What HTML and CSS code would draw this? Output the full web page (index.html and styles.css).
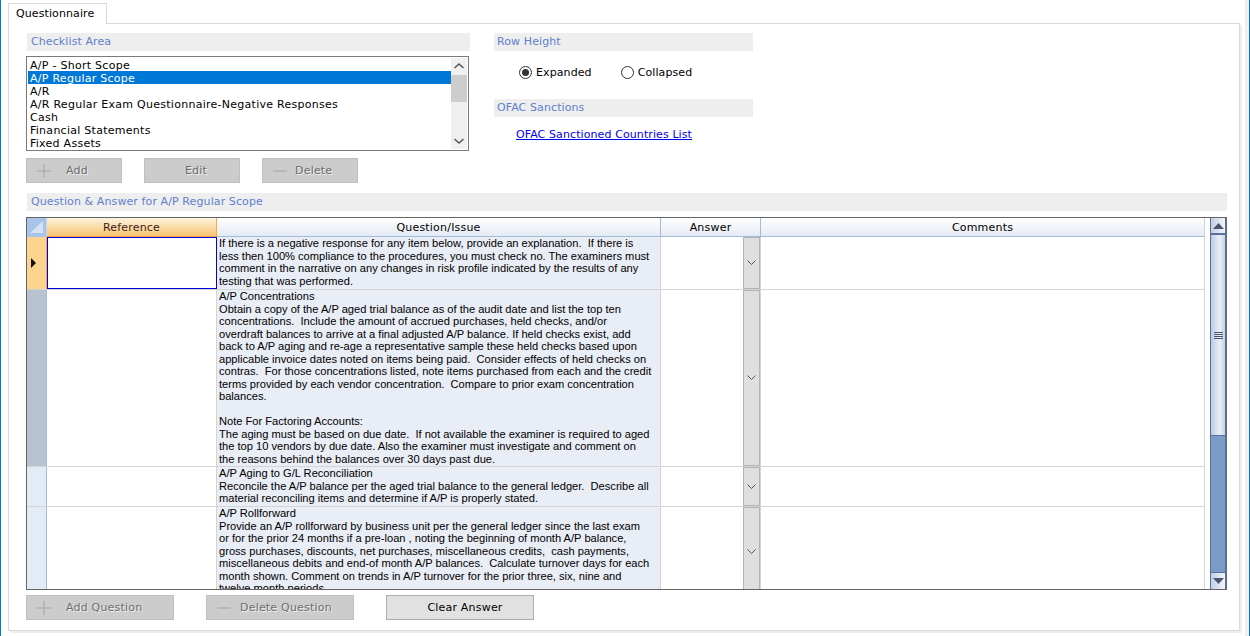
FILE: index.html
```html
<!DOCTYPE html>
<html lang="en">
<head>
<meta charset="utf-8">
<title>Questionnaire</title>
<link rel="stylesheet" href="styles.css">
</head>
<body>
<div class="window">
  <div class="tabs"><div class="tab">Questionnaire</div></div>
  <div class="panel">
    <div class="top">
      <section class="left">
        <h2 class="band">Checklist Area</h2>
        <div class="listbox">
          <ul class="items">
            <li>A/P - Short Scope</li>
            <li class="sel">A/P Regular Scope</li>
            <li>A/R</li>
            <li>A/R Regular Exam Questionnaire-Negative Responses</li>
            <li>Cash</li>
            <li>Financial Statements</li>
            <li>Fixed Assets</li>
          </ul>
          <div class="lscroll">
            <svg class="chev" width="16" height="17" viewBox="0 0 16 17"><path d="M3.5 10 L8 6 L12.5 10" fill="none" stroke="#555" stroke-width="1.5"/></svg>
            <div class="lthumb"></div>
            <div class="lspace"></div>
            <svg class="chev" width="16" height="17" viewBox="0 0 16 17"><path d="M3.5 7 L8 11 L12.5 7" fill="none" stroke="#555" stroke-width="1.5"/></svg>
          </div>
        </div>
        <div class="btns btns-list">
          <button class="btn off w96"><svg class="ico" width="16" height="16" viewBox="0 0 16 16"><path d="M8 1V15M1 8H15" stroke="#a4a4a4"/></svg><span class="lab-add">Add</span></button>
          <button class="btn off w96 center shift-edit">Edit</button>
          <button class="btn off w96"><svg class="ico" width="16" height="16" viewBox="0 0 16 16"><path d="M1 8H15" stroke="#a4a4a4"/></svg><span class="lab-del">Delete</span></button>
        </div>
      </section>
      <section class="right">
        <h2 class="band">Row Height</h2>
        <div class="radios">
          <span class="radio"><span class="dot on"></span>Expanded</span>
          <span class="radio"><span class="dot"></span>Collapsed</span>
        </div>
        <h2 class="band">OFAC Sanctions</h2>
        <a class="link" href="#">OFAC Sanctioned Countries List</a>
      </section>
    </div>
    <h2 class="band wide">Question &amp; Answer for A/P Regular Scope</h2>
    <div class="grid">
      <div class="gridmain">
        <div class="row head">
          <div class="corner"><svg width="19" height="18" viewBox="0 0 19 18"><path d="M16 3V15H3Z" fill="#d5e2f4"/></svg></div>
          <div class="hc ref">Reference</div>
          <div class="hc q">Question/Issue</div>
          <div class="hc a">Answer</div>
          <div class="hc c">Comments</div>
        </div>
        <div class="row r1">
          <div class="sel-mark"><svg width="6" height="10" viewBox="0 0 6 10"><path d="M0 0L5 5L0 10Z" fill="#111"/></svg></div>
          <div class="cell ref focus"></div>
          <div class="cell q">If there is a negative response for any item below, provide an explanation.&nbsp; If there is<br>less then 100% compliance to the procedures, you must check no. The examiners must<br>comment in the narrative on any changes in risk profile indicated by the results of any<br>testing that was performed.</div>
          <div class="cell a"><div class="dd"><svg width="9" height="6" viewBox="0 0 9 6"><path d="M0.5 0.5L4.5 4.5L8.5 0.5" fill="none" stroke="#555"/></svg></div></div>
          <div class="cell c"></div>
        </div>
        <div class="row r2">
          <div class="mark dark"></div>
          <div class="cell ref"></div>
          <div class="cell q">A/P Concentrations<br>Obtain a copy of the A/P aged trial balance as of the audit date and list the top ten<br>concentrations.&nbsp; Include the amount of accrued purchases, held checks, and/or<br>overdraft balances to arrive at a final adjusted A/P balance. If held checks exist, add<br>back to A/P aging and re-age a representative sample these held checks based upon<br>applicable invoice dates noted on items being paid.&nbsp; Consider effects of held checks on<br>contras.&nbsp; For those concentrations listed, note items purchased from each and the credit<br>terms provided by each vendor concentration.&nbsp; Compare to prior exam concentration<br>balances.<br><br>Note For Factoring Accounts:<br>The aging must be based on due date.&nbsp; If not available the examiner is required to aged<br>the top 10 vendors by due date. Also the examiner must investigate and comment on<br>the reasons behind the balances over 30 days past due.</div>
          <div class="cell a"><div class="dd"><svg width="9" height="6" viewBox="0 0 9 6"><path d="M0.5 0.5L4.5 4.5L8.5 0.5" fill="none" stroke="#555"/></svg></div></div>
          <div class="cell c"></div>
        </div>
        <div class="row r3">
          <div class="mark"></div>
          <div class="cell ref"></div>
          <div class="cell q">A/P Aging to G/L Reconciliation<br>Reconcile the A/P balance per the aged trial balance to the general ledger.&nbsp; Describe all<br>material reconciling items and determine if A/P is properly stated.</div>
          <div class="cell a"><div class="dd"><svg width="9" height="6" viewBox="0 0 9 6"><path d="M0.5 0.5L4.5 4.5L8.5 0.5" fill="none" stroke="#555"/></svg></div></div>
          <div class="cell c"></div>
        </div>
        <div class="row r4">
          <div class="mark"></div>
          <div class="cell ref"></div>
          <div class="cell q">A/P Rollforward<br>Provide an A/P rollforward by business unit per the general ledger since the last exam<br>or for the prior 24 months if a pre-loan , noting the beginning of month A/P balance,<br>gross purchases, discounts, net purchases, miscellaneous credits,&nbsp; cash payments,<br>miscellaneous debits and end-of month A/P balances.&nbsp; Calculate turnover days for each<br>month shown. Comment on trends in A/P turnover for the prior three, six, nine and<br>twelve month periods.</div>
          <div class="cell a"><div class="dd"><svg width="9" height="6" viewBox="0 0 9 6"><path d="M0.5 0.5L4.5 4.5L8.5 0.5" fill="none" stroke="#555"/></svg></div></div>
          <div class="cell c"></div>
        </div>
      </div>
      <div class="gscroll">
        <div class="garrow up"><svg width="11" height="6" viewBox="0 0 11 6"><path d="M5.5 0L11 6H0Z" fill="#4a5670"/></svg></div>
        <div class="gthumb"><svg width="11" height="7" viewBox="0 0 11 7"><path d="M1 .5H10M1 2.5H10M1 4.5H10M1 6.5H10" stroke="#4a5670"/></svg></div>
        <div class="gtrack"></div>
        <div class="garrow down"><svg width="11" height="6" viewBox="0 0 11 6"><path d="M0 0H11L5.5 6Z" fill="#4a5670"/></svg></div>
      </div>
    </div>
    <div class="btns btns-grid">
      <button class="btn off w148"><svg class="ico" width="16" height="16" viewBox="0 0 16 16"><path d="M8 1V15M1 8H15" stroke="#a4a4a4"/></svg><span class="lab-addq">Add Question</span></button>
      <button class="btn off w148"><svg class="ico" width="16" height="16" viewBox="0 0 16 16"><path d="M1 8H15" stroke="#a4a4a4"/></svg><span class="lab-delq">Delete Question</span></button>
      <button class="btn w148 center shift-clear">Clear Answer</button>
    </div>
  </div>
</div>
</body>
</html>
```
FILE: styles.css
```css
* { box-sizing: border-box; }
html, body { margin: 0; padding: 0; background: #fff; }
body { font-family: "DejaVu Sans", sans-serif; font-size: 11px; letter-spacing: 0.1px; color: #000; }
.window { width: 1250px; height: 636px; overflow: hidden; border-left: 1px solid #0078d7; border-right: 1px solid #0078d7; padding: 3px 0 0 7px; background: #fff; box-shadow: inset -4px 0 0 #f0f0f0; }
.tabs { display: flex; height: 20px; }
.tab { width: 99px; height: 21px; padding: 3px 0 0 7px; border: 1px solid #d9d9d9; border-bottom: 0; background: #fff; position: relative; z-index: 1; }
.panel { width: 1232px; height: 608px; border: 1px solid #d9d9d9; padding: 9px 12px 0 17px; box-shadow: 2px 2px 0 #eeeeee; }
.top { display: flex; gap: 24px; height: 160px; }
.left { width: 444px; }
.right { width: 259px; }
.band { margin: 0; height: 18px; line-height: 18px; padding-left: 3px; background: #eeeeee; color: #5f7fcc; font-size: 11px; font-weight: normal; }
.left > .band { margin-left: 1px; padding-left: 4px; }
.band.wide { width: 1200px; margin-left: 1px; padding-left: 4px; }
.listbox { display: flex; margin-top: 5px; width: 443px; height: 95px; border: 1px solid #7a7a7a; background: #fff; padding: 1px; }
.items { list-style: none; margin: 0; padding: 0; width: 424px; letter-spacing: 0.27px; }
.items li { height: 13px; line-height: 15px; padding-left: 2px; white-space: nowrap; }
.items li.sel { background: #0078d7; color: #fff; }
.lscroll { width: 16px; background: #f0f0f0; display: flex; flex-direction: column; }
.chev { display: block; width: 16px; height: 17px; flex: none; }
.lthumb { height: 27px; background: #cdcdcd; }
.lspace { flex: 1; }
.btns { display: flex; }
.btns-list { gap: 22px; margin-top: 7px; }
.btns-grid { gap: 32px; margin-top: 5px; }
.btn { display: flex; align-items: center; height: 25px; padding: 0; border: 1px solid #adadad; background: #e1e1e1; color: #000; font: 11px "DejaVu Sans", sans-serif; letter-spacing: 0.2px; position: relative; }
.btn.off { background: #cccccc; border-color: #bfbfbf; color: #6d6d6d; text-shadow: 1px 1px 0 #eee; }
.w96 { width: 96px; }
.w148 { width: 148px; }
.center { justify-content: center; }
.shift-edit { padding-left: 8px; }
.shift-clear { padding-left: 10px; }
.ico { flex: none; margin-left: 9px; }
.lab-add { margin-left: 14px; }
.lab-del { margin-left: 7px; }
.lab-addq { margin-left: 14px; }
.lab-delq { margin-left: 8px; }
.radios { display: flex; height: 48px; padding: 14px 0 0 25px; gap: 29px; }
.radio { display: flex; align-items: flex-start; height: 18px; line-height: 15px; }
.dot { width: 13px; height: 13px; border: 1px solid #333; border-radius: 50%; margin-right: 4px; background: #fff; position: relative; flex: none; margin-top: 1px; }
.dot.on::after { content: ""; position: absolute; left: 2px; top: 2px; width: 7px; height: 7px; border-radius: 50%; background: #333; }
.link { display: block; margin: 11px 0 0 22px; color: #0000ee; text-decoration: underline; }
.grid { display: flex; margin-top: 6px; width: 1201px; height: 373px; border: 1px solid #646464; border-right: 0; overflow: hidden; }
.gridmain { width: 1183px; flex: none; overflow: hidden; padding-right: 5px; }
.row { display: flex; border-bottom: 1px solid #d4d4d4; overflow: hidden; }
.row.head { height: 19px; border: 0; }
.r1 { height: 53px; }
.r2 { height: 177px; }
.r3 { height: 40px; }
.r4 { height: 90px; border-bottom: 0; }
.corner { width: 20px; flex: none; background: #a9c4e9; border-right: 1px solid #c5d7ee; border-bottom: 1px solid #a9c4e9; }
.corner svg { display: block; }
.hc { flex: none; text-align: center; line-height: 19px; border-right: 1px solid #9fbdd9; border-bottom: 1px solid #9fbdd9; background: linear-gradient(#ffffff, #e5eaf3); font-size: 11px; letter-spacing: 0.2px; }
.hc.ref { width: 170px; background: linear-gradient(#fdf3dc, #f8c672); border-right: 1px solid #f4a93f; border-bottom-color: #f4a93f; color: #3a1c1c; }
.hc.q { width: 444px; }
.hc.a { width: 100px; }
.hc.c { width: 444px; border-right: 1px solid #d4d4d4; }
.sel-mark { width: 20px; flex: none; background: #fdd48d; border-right: 1px solid #f4a93f; display: flex; align-items: center; padding-left: 4px; margin-bottom: -1px; border-bottom: 1px solid #f4a93f; }
.mark { width: 20px; flex: none; background: #e3ebf7; border-right: 1px solid #9fbdd9; margin-bottom: -1px; border-bottom: 1px solid #d4d4d4; }
.mark.dark { background: #b8c3d1; }
.cell { flex: none; border-right: 1px solid #d4d4d4; }
.cell.ref { width: 170px; background: #fff; }
.cell.ref.focus { border: 1px solid #0000e0; }
.cell.q { width: 444px; background: #e9edf5; padding: 0 0 0 2px; font-family: "Liberation Sans", sans-serif; font-size: 11.12px; line-height: 12.5px; letter-spacing: 0; white-space: nowrap; overflow: hidden; }
.cell.a { width: 100px; background: #fff; display: flex; justify-content: flex-end; }
.dd { width: 17px; height: 100%; background: #dfdfdf; border: 1px solid #b4b4b4; display: flex; align-items: center; justify-content: center; }
.cell.c { width: 444px; }
.gscroll { width: 17px; flex: none; display: flex; flex-direction: column; background: #7a9cc6; border-left: 1px solid #5a6f9e; border-right: 2px solid #5d6d8f; }
.garrow { flex: none; background: linear-gradient(90deg, #c3cfe3, #f2f5fa); display: flex; align-items: center; justify-content: center; }
.garrow.up { height: 15px; }
.garrow.down { border-top: 1px solid #5a6f9e; height: 17px; }
.gthumb { height: 203px; flex: none; background: linear-gradient(90deg, #bccbe0, #eaeff6 60%, #c6d3e6); border-top: 2px solid #5a6f9e; border-bottom: 1px solid #5a6f9e; display: flex; align-items: center; justify-content: center; }
.gtrack { flex: 1; background: #7a9cc6; }
```
